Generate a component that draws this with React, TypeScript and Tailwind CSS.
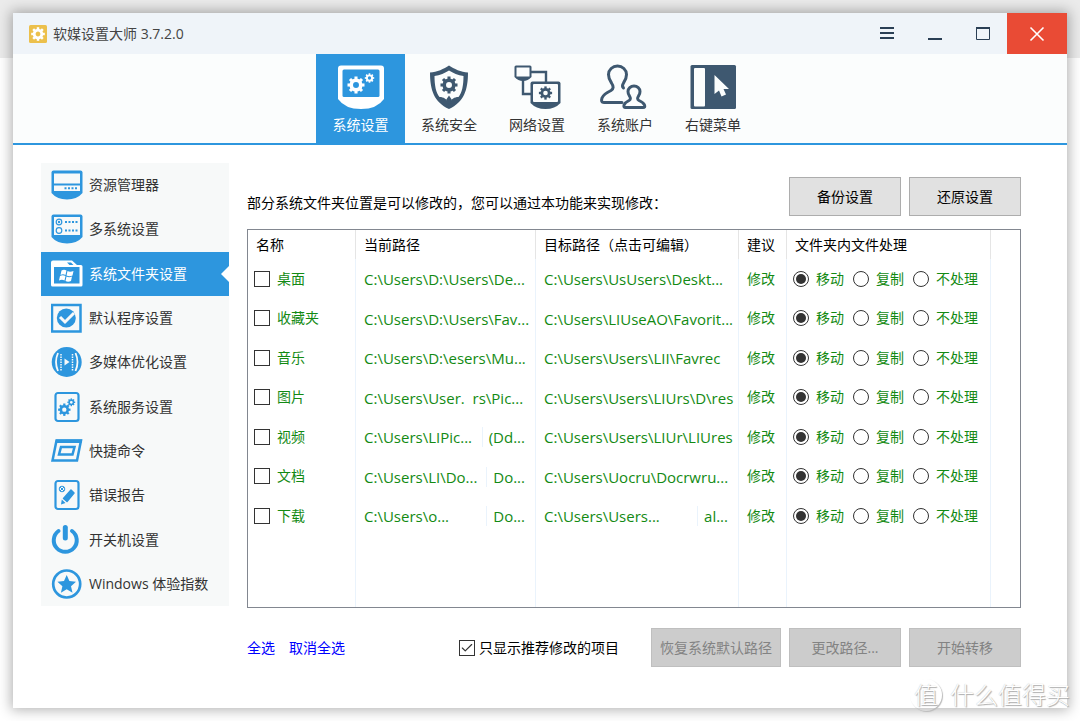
import { useState } from "react"
import type { ReactNode } from "react"
import { Check } from "lucide-react"

const BLUE = "#2d96de"
const NAVY = "#3e5870"

interface GearProps {
  x: number
  y: number
  r: number
  color: string
}

function Gear({ x, y, r, color }: GearProps) {
  return (
    <g transform={`translate(${x} ${y})`}>
      <circle r={r * 0.56} fill="none" stroke={color} strokeWidth={r * 0.42} />
      {[0, 45, 90, 135, 180, 225, 270, 315].map((a) => (
        <rect key={a} x={-r * 0.18} y={-r} width={r * 0.36} height={r * 0.35} fill={color} transform={`rotate(${a})`} />
      ))}
    </g>
  )
}

const tabs: { name: string; icon: ReactNode }[] = [
  {
    name: "系统设置",
    icon: (
      <>
        <path d="M4 .5H44Q47 .5 47 3.5V34Q40 44 24 44Q8 44 1 34V3.5Q1 .5 4 .5Z" fill="#fff" />
        <rect x="5.5" y="4.5" width="37" height="27.5" rx="1.5" fill={BLUE} />
        <Gear x={19} y={20} r={8.5} color="#fff" />
        <Gear x={32.5} y={13} r={4.7} color="#fff" />
      </>
    ),
  },
  {
    name: "系统安全",
    icon: (
      <>
        <path d="M24 .5C19 4 12 7 5 7.5C5 25 9 37 24 44C39 37 43 25 43 7.5C36 7 29 4 24 .5Z" fill={NAVY} />
        <path d="M24 5.5C20 8 15 10.5 9.5 11C9.5 20 11 28 14.5 32C19 32 21 34 24 38C27 34 29 32 33.5 32C37 28 38.5 20 38.5 11C33 10.5 28 8 24 5.5Z" fill="#fbfdfd" />
        <path d="M24 30.5L27 35L24 40L21 35Z" fill={NAVY} />
        <Gear x={24} y={20} r={8.5} color={NAVY} />
      </>
    ),
  },
  {
    name: "网络设置",
    icon: (
      <>
        <path d="M18 7H33V18M10 15V29H18" fill="none" stroke={NAVY} strokeWidth="2.4" />
        <path d="M3 .5H17Q18.500 .5 18.500 2V12Q15 16 10 16Q5 16 1.500 12V2Q1.500 .5 3 .5Z" fill={NAVY} />
        <rect x="3.500" y="2.500" width="13" height="9" fill="#fbfdfd" />
        <path d="M19.500 16.500H45.500Q47.500 16.500 47.500 18.500V38Q42 44 32.500 44Q23 44 17.500 38V18.500Q17.500 16.500 19.500 16.500Z" fill={NAVY} />
        <rect x="20" y="19" width="25" height="18" rx="1" fill="#fbfdfd" />
        <Gear x={32.5} y={28} r={6.6} color={NAVY} />
      </>
    ),
  },
  {
    name: "系统账户",
    icon: (
      <g fill="none" stroke={NAVY} strokeWidth="3" strokeLinecap="round" strokeLinejoin="round">
        <path d="M21 37.500H3Q-.5 37.500 1 33Q2.500 29 10 25.500Q14 23 10.500 18Q7.500 14 7.500 9.500A9 8.500 0 0 1 25.500 9.500Q25.500 14 22.500 18Q20.500 21 22.500 23" />
        <path d="M24.500 42.500H42Q44.500 42.500 43.500 40Q42.500 37.500 38 35.500Q35.500 34 37.500 31Q39 29 39 26.500A6 5.500 0 0 0 27 26.500Q27 29 28.500 31Q30.500 34 28 35.500Q24 37.500 23 40Q22.500 42.500 24.500 42.500Z" />
      </g>
    ),
  },
  {
    name: "右键菜单",
    icon: (
      <>
        <rect x="1.500" y="0" width="45.500" height="44" rx="1.500" fill={NAVY} />
        <rect x="5" y="3" width="11" height="38.500" rx="1" fill="#fbfdfd" />
        <path d="M25.500 10V29L30 25.500L32.500 31.500L37 29.500L34.500 24H40Z" fill="#fbfdfd" />
      </>
    ),
  },
]

const menu: { name: string; icon: ReactNode }[] = [
  {
    name: "资源管理器",
    icon: (
      <>
        <path d="M2.500 1.500H29.500Q31.500 1.500 31.500 3.500V24Q26 30.500 16 30.500Q6 30.500 .5 24V3.500Q.5 1.500 2.500 1.500Z" fill={BLUE} />
        <path d="M3 4.500H29V14.500H3ZM3 16.500H29V22H3Z" fill="#f7f9f9" />
        <path d="M13.500 19.300H27" stroke={BLUE} strokeWidth="2" strokeDasharray="2 1.500" />
      </>
    ),
  },
  {
    name: "多系统设置",
    icon: (
      <>
        <path d="M2.500 1.500H29.500Q31.500 1.500 31.500 3.500V24Q26 30.500 16 30.500Q6 30.500 .5 24V3.500Q.5 1.500 2.500 1.500Z" fill={BLUE} />
        <rect x="3" y="4" width="26" height="18" fill="#f7f9f9" />
        <circle cx="8" cy="9" r="2.800" fill="none" stroke={BLUE} strokeWidth="1.200" />
        <circle cx="8" cy="9" r="1.200" fill={BLUE} />
        <circle cx="8" cy="17.500" r="2.800" fill="none" stroke={BLUE} strokeWidth="1.200" />
        <path d="M14 9H27.500M14 17.500H27.500" stroke={BLUE} strokeWidth="2" strokeDasharray="2 1.500" />
      </>
    ),
  },
  {
    name: "系统文件夹设置",
    icon: (
      <>
        <path d="M2 2.500H21L26 7H30Q31.500 7 31.500 8.500V27Q31.500 28.500 30 28.500H1.500Q0 28.500 0 27V4.500Q0 2.500 2 2.500Z" fill="#fff" />
        <path d="M16 4.500H20L22.500 7H18.500ZM3 9H28.500V25.500H3Z" fill={BLUE} />
        <path d="M10.500 12.500Q13 11 15.500 12.500L14.500 17Q12 15.500 9.500 17ZM16.500 13Q19 14.500 22.500 13L21.500 17.500Q18.500 19 15.500 17.500ZM9 18Q11.500 16.500 14.500 18L13.500 22.500Q11 21 8 22.500ZM15.500 18.500Q18 20 21 18.500L20 23Q17 24.500 14.500 23Z" fill="#fff" />
      </>
    ),
  },
  {
    name: "默认程序设置",
    icon: (
      <>
        <rect x="1" y="3" width="28.500" height="26.500" fill="none" stroke={BLUE} strokeWidth="2.500" />
        <circle cx="15.300" cy="16" r="9.500" fill={BLUE} />
        <path d="M9 15L14 20L23 11" fill="none" stroke="#f7f9f9" strokeWidth="3" />
      </>
    ),
  },
  {
    name: "多媒体优化设置",
    icon: (
      <>
        <circle cx="15.700" cy="16" r="15" fill={BLUE} />
        <path d="M7 7Q3 16 7 25M24.500 7Q28.500 16 24.500 25" fill="none" stroke="#f7f9f9" strokeWidth="1.800" />
        <path d="M10 8V25M21.500 8V25" stroke="#f7f9f9" strokeWidth="1.500" strokeDasharray="1.500 1" />
        <path d="M13.500 12.500V19.500L18.500 16Z" fill="#f7f9f9" />
      </>
    ),
  },
  {
    name: "系统服务设置",
    icon: (
      <>
        <rect x="4.500" y="2" width="23" height="28" rx="2.500" fill="none" stroke={BLUE} strokeWidth="2.200" />
        <Gear x={13.3} y={18.7} r={6.2} color={BLUE} />
        <Gear x={20.3} y={11.3} r={3.9} color={BLUE} />
      </>
    ),
  },
  {
    name: "快捷命令",
    icon: (
      <>
        <path d="M5.500 5.500H30L26 25.500H1.500Z" fill="none" stroke={BLUE} strokeWidth="2.500" />
        <path d="M10 12H23.500L21.500 19.500H8Z" fill="none" stroke={BLUE} strokeWidth="2.500" />
        <path d="M5 4.500H31L30.500 8H4.500Z" fill={BLUE} />
      </>
    ),
  },
  {
    name: "错误报告",
    icon: (
      <>
        <rect x="4.500" y="2" width="23" height="28" rx="2.500" fill="none" stroke={BLUE} strokeWidth="2.200" />
        <circle cx="11" cy="10" r="2.800" fill="none" stroke={BLUE} strokeWidth="1" />
        <path d="M9 8L13 12M13 8L9 12" stroke={BLUE} strokeWidth="1" />
        <path d="M20 11L23 14L16 22.500L12.500 19.500Z" fill={BLUE} stroke={BLUE} strokeWidth="1.500" strokeLinejoin="round" />
        <path d="M10.800 20.500L14.500 24L10 25.500Z" fill={BLUE} />
      </>
    ),
  },
  {
    name: "开关机设置",
    icon: (
      <g fill="none" stroke={BLUE} strokeLinecap="round">
        <path d="M7.500 7A11.500 11.500 0 1 0 21 7" strokeWidth="4" />
        <path d="M14.300 3.500V14" strokeWidth="5" />
      </g>
    ),
  },
  {
    name: "Windows 体验指数",
    icon: (
      <>
        <circle cx="15.700" cy="16" r="13.500" fill="none" stroke={BLUE} strokeWidth="2.700" />
        <path d="M15.700 7L18.400 13L25 13.700L20 18.200L21.500 24.700L15.700 21.300L9.900 24.700L11.400 18.200L6.400 13.700L13 13Z" fill={BLUE} />
      </>
    ),
  },
]

interface Folder {
  name: string
  current: string[]
  target: string[]
}

const folders: Folder[] = [
  { name: "桌面", current: ["C:\\Users\\D:\\Users\\De..."], target: ["C:\\Users\\UsUsers\\Deskt..."] },
  { name: "收藏夹", current: ["C:\\Users\\D:\\Users\\Fav..."], target: ["C:\\Users\\LIUseAO\\Favorit..."] },
  { name: "音乐", current: ["C:\\Users\\D:\\esers\\Mu..."], target: ["C:\\Users\\Users\\LII\\Favrec"] },
  { name: "图片", current: ["C:\\Users\\User.  rs\\Pic..."], target: ["C:\\Users\\Users\\LIUrs\\D\\res"] },
  { name: "视频", current: ["C:\\Users\\LIPic...", "(Dd..."], target: ["C:\\Users\\Users\\LIUr\\LIUres"] },
  { name: "文档", current: ["C:\\Users\\LI\\Do...", "Do..."], target: ["C:\\Users\\Uocru\\Docrwru..."] },
  { name: "下载", current: ["C:\\Users\\o...", "Do..."], target: ["C:\\Users\\Users...", "al..."] },
]

const actions = ["移动", "复制", "不处理"]

function PathText({ parts }: { parts: string[] }) {
  return (
    <div className="flex justify-between pt-px pr-[10px] pl-2 text-[15px] whitespace-pre">
      <span>{parts[0]}</span>
      {parts[1] && <span className="border-l border-[#eaf3fc] pl-[6px]">{parts[1]}</span>}
    </div>
  )
}

const checkboxClass = "size-4 shrink-0 appearance-none border border-[#333] bg-white"
const buttonClass = "h-[39px] border border-[#adadad] bg-[#e1e1e1] text-black"
const disabledClass = "h-[39px] border border-[#bfbfbf] bg-[#cccccc] text-[#838383]"
const headClass = "border-r border-[#e5e5e5] pl-2 text-left font-normal"
const cellClass = "border-r border-[#eaf3fc] p-0"

export default function App() {
  const [tab, setTab] = useState("系统设置")
  const [page, setPage] = useState("系统文件夹设置")

  return (
    <div className="relative flex min-h-screen bg-[linear-gradient(#ebebeb_58px,#ffffff_58px)] p-[13px] font-['Open_Sans','Noto_Sans_CJK_SC',sans-serif] text-sm leading-5 text-black">
      <div className="flex min-w-0 flex-1 flex-col bg-white shadow-[0_0_12px_2px_rgba(0,0,0,0.3)]">
        <header className="flex h-[41px] items-center bg-[#eff4f9] text-[#444]">
          <svg className="ml-4 size-[18px]" viewBox="0 0 18 18">
            <rect width="18" height="18" rx="1.500" fill="#ecc04c" />
            <Gear x={9} y={9} r={6.8} color="#fff" />
          </svg>
          <h1 className="ml-[6px] flex-1">软媒设置大师 3.7.2.0</h1>
          <button aria-label="菜单" className="flex h-full w-12 items-center justify-center">
            <svg width="16" height="16" viewBox="0 0 16 16">
              <path d="M1 2H15M1 7H15M1 12H15" stroke="#2a3f55" strokeWidth="2" />
            </svg>
          </button>
          <button aria-label="最小化" className="flex h-full w-12 items-center justify-center">
            <svg width="16" height="16" viewBox="0 0 16 16">
              <path d="M1 13H15" stroke="#2a3f55" strokeWidth="2" />
            </svg>
          </button>
          <button aria-label="最大化" className="flex h-full w-12 items-center justify-center">
            <svg width="16" height="16" viewBox="0 0 16 16">
              <path d="M1.500 1V13.500H14.500V1" fill="none" stroke="#2a3f55" />
              <path d="M1 2H15" stroke="#2a3f55" strokeWidth="2" />
            </svg>
          </button>
          <button aria-label="关闭" className="flex h-full w-[60px] items-center justify-center bg-[#e94b35]">
            <svg width="16" height="16" viewBox="0 0 16 16">
              <path d="M1.500 1.500L14.500 14.500M14.500 1.500L1.500 14.500" stroke="#fff" strokeWidth="1.600" />
            </svg>
          </button>
        </header>

        <nav className="flex justify-center border-b-2 border-[#2d96de] bg-[#fbfdfd] pr-[7px]">
          {tabs.map(({ name, icon }) => (
            <button
              key={name}
              onClick={() => setTab(name)}
              className={`flex h-[89px] flex-col items-center pt-[11px] ${
                tab === name ? "w-[89px] bg-[#2d96de] text-white" : "w-[88px] text-[#333]"
              }`}
            >
              <svg width="48" height="44" viewBox="0 0 48 44" overflow="visible">{icon}</svg>
              <span className="mt-[6px]">{name}</span>
            </button>
          ))}
        </nav>

        <div className="flex flex-1 pt-[18px] pr-[46px] pl-7">
          <aside className="grid h-[443px] w-[188px] shrink-0 auto-rows-fr bg-[#f7f9f9]">
            {menu.map(({ name, icon }) => (
              <button
                key={name}
                onClick={() => setPage(name)}
                className={`relative flex items-center gap-[6px] pl-[10px] whitespace-nowrap ${
                  page === name ? "bg-[#2d96de] text-white" : "text-[#333]"
                }`}
              >
                <svg width="32" height="32" viewBox="0 0 32 32">{icon}</svg>
                <span>{name}</span>
                {page === name && (
                  <svg className="absolute right-0" width="8" height="16" viewBox="0 0 8 16">
                    <path d="M8 0V16L0 8Z" fill="#fff" />
                  </svg>
                )}
              </button>
            ))}
          </aside>

          <main className="ml-[18px] min-w-0 flex-1 pt-[14px]">
            <div className="flex gap-2">
              <p className="flex-1 pt-4">部分系统文件夹位置是可以修改的，您可以通过本功能来实现修改：</p>
              <button className={`${buttonClass} w-28`}>备份设置</button>
              <button className={`${buttonClass} w-28`}>还原设置</button>
            </div>

            <div className="mt-[13px] border border-[#828790]">
              <table className="w-full table-fixed border-separate border-spacing-0">
                <colgroup>
                  <col className="w-[108px]" />
                  <col className="w-[180px]" />
                  <col className="w-[203px]" />
                  <col className="w-12" />
                  <col className="w-[204px]" />
                  <col />
                </colgroup>
                <thead>
                  <tr className="h-[29px]">
                    <th className={headClass}>名称</th>
                    <th className={headClass}>当前路径</th>
                    <th className={headClass}>目标路径（点击可编辑）</th>
                    <th className={headClass}>建议</th>
                    <th className={headClass}>文件夹内文件处理</th>
                    <td />
                  </tr>
                </thead>
                <tbody className="text-[#138a13]">
                  {folders.map(({ name, current, target }) => (
                    <tr key={name} className="odd:h-[39px] even:h-10">
                      <td className={cellClass}>
                        <label className="flex items-center gap-[7px] pl-[6px]">
                          <input type="checkbox" className={checkboxClass} />
                          {name}
                        </label>
                      </td>
                      <td className={cellClass}><PathText parts={current} /></td>
                      <td className={cellClass}><PathText parts={target} /></td>
                      <td className={`${cellClass} pl-2`}>修改</td>
                      <td className={cellClass}>
                        <div className="flex pl-[6px]">
                          {actions.map((action, i) => (
                            <label key={action} className="flex min-w-[60px] items-center gap-[7px]">
                              <input
                                type="radio"
                                name={name}
                                defaultChecked={i === 0}
                                className="grid size-4 shrink-0 appearance-none place-content-center rounded-full border border-[#333] bg-white checked:before:size-[10px] checked:before:rounded-full checked:before:bg-[#333]"
                              />
                              {action}
                            </label>
                          ))}
                        </div>
                      </td>
                      <td />
                    </tr>
                  ))}
                  <tr className="h-[72px]">
                    <td className={cellClass} />
                    <td className={cellClass} />
                    <td className={cellClass} />
                    <td className={cellClass} />
                    <td className={cellClass} />
                    <td />
                  </tr>
                </tbody>
              </table>
            </div>

            <div className="mt-5 flex items-center gap-2">
              <div className="flex flex-1 gap-[14px] text-[#0000ff]">
                <a href="#all">全选</a>
                <a href="#none">取消全选</a>
              </div>
              <label className="mr-6 flex items-center gap-1">
                <span className="relative flex">
                  <input type="checkbox" defaultChecked className={`${checkboxClass} peer`} />
                  <Check className="pointer-events-none absolute inset-0 hidden size-4 p-px text-[#333] peer-checked:block" />
                </span>
                只显示推荐修改的项目
              </label>
              <button disabled className={`${disabledClass} w-[130px]`}>恢复系统默认路径</button>
              <button disabled className={`${disabledClass} w-28`}>更改路径...</button>
              <button disabled className={`${disabledClass} w-28`}>开始转移</button>
            </div>
          </main>
        </div>
      </div>

      <div className="absolute right-[10px] bottom-[10px] flex items-center gap-2 text-2xl leading-8 font-light text-white [text-shadow:1px_1px_1px_#aaa,0_0_1px_#bbb]">
        <span className="flex size-8 items-center justify-center rounded-full shadow-[1px_1px_1px_#bbb]">值</span>
        <span>什么值得买</span>
      </div>
    </div>
  )
}
